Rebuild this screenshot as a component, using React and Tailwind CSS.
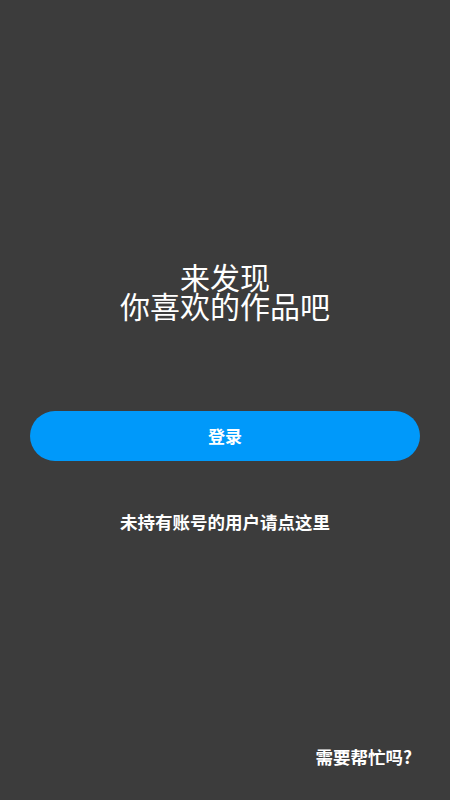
export default function App() {
  return (
    <div
      className="w-[450px] h-[800px] bg-[#3c3c3c] flex flex-col text-white"
      style={{ fontFamily: '"Noto Sans CJK SC", "Noto Sans", sans-serif' }}
    >
      <div className="pt-[262px] text-center text-[30px] leading-[29px] font-normal">
        <div>来发现</div>
        <div>你喜欢的作品吧</div>
      </div>
      <div className="mt-[91px] mx-[30px] h-[50px] rounded-full bg-[#0099fa] flex items-center justify-center">
        <span className="text-[17px] font-bold">登录</span>
      </div>
      <div className="mt-[49px] text-center text-[17.5px] leading-[24px] font-bold">
        未持有账号的用户请点这里
      </div>
      <div className="mt-auto pb-[31px] pr-[38px] flex justify-end text-[17.5px] leading-[24px] font-bold">
        需要帮忙吗?
      </div>
    </div>
  );
}
